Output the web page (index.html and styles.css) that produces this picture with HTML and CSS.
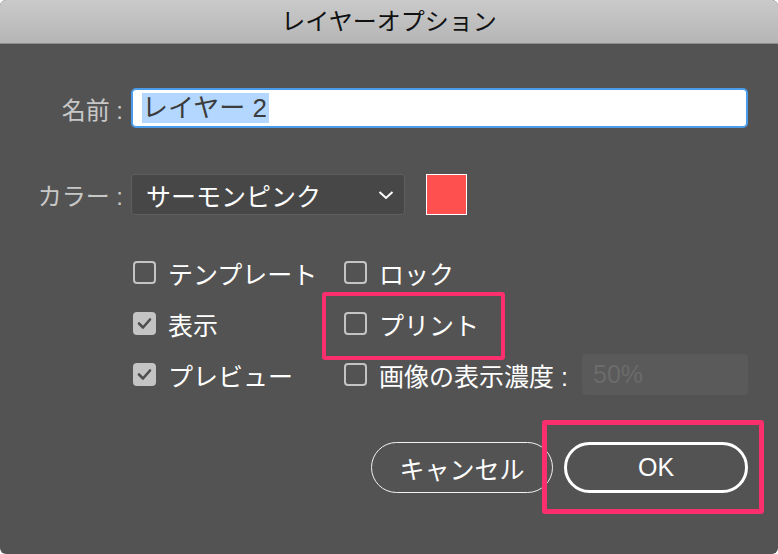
FILE: index.html
```html
<!DOCTYPE html>
<html lang="ja">
<head>
    <meta charset="UTF-8">
    <title>レイヤーオプション</title>
    <link rel="stylesheet" href="styles.css">
</head>
<body>
    <div class="dialog">
        <div class="titlebar">レイヤーオプション</div>

        <div class="content">
            <div class="field">
                <label class="field-label">名前 :</label>
                <div class="name-input"><span class="selected">レイヤー 2</span></div>
            </div>

            <div class="field field-color">
                <label class="field-label">カラー :</label>
                <div class="select">
                    <span>サーモンピンク</span>
                    <svg class="chevron" width="16" height="10" viewBox="0 0 16 10">
                        <polyline points="1.5,2 8,8 14.5,2" fill="none" stroke="#fff" stroke-width="2"/>
                    </svg>
                </div>
                <div class="swatch"></div>
            </div>

            <div class="options">
                <div class="option"><span class="box"></span>テンプレート</div>
                <div class="option"><span class="box"></span>ロック</div>
                <div class="option">
                    <span class="box checked">
                        <svg width="23" height="23" viewBox="0 0 23 23"><polyline points="6,11.5 10,15.5 17,7.5" fill="none" stroke="#4f4f4f" stroke-width="2.6" stroke-linecap="round" stroke-linejoin="round"/></svg>
                    </span>表示
                </div>
                <div class="option"><span class="box"></span>プリント</div>
                <div class="option">
                    <span class="box checked">
                        <svg width="23" height="23" viewBox="0 0 23 23"><polyline points="6,11.5 10,15.5 17,7.5" fill="none" stroke="#4f4f4f" stroke-width="2.6" stroke-linecap="round" stroke-linejoin="round"/></svg>
                    </span>プレビュー
                </div>
                <div class="option">
                    <span class="box"></span>画像の表示濃度 :
                    <div class="dim-input">50%</div>
                </div>
            </div>

            <div class="buttons">
                <button class="btn">キャンセル</button>
                <button class="btn btn-ok">OK</button>
            </div>
        </div>

        <!-- 注釈の枠 -->
        <div class="mark mark-print"></div>
        <div class="mark mark-ok"></div>
    </div>
</body>
</html>
```

FILE: styles.css
```css
body {
    margin: 0;
    background: #ffffff;
    font-family: "Liberation Sans", "Noto Sans CJK JP", sans-serif;
}
.dialog {
    position: relative;
    width: 778px;
    height: 554px;
    background: #535353;
    border-radius: 6px;
    overflow: hidden;
}
.titlebar {
    height: 43px;
    line-height: 43px;
    text-align: center;
    font-size: 24px;
    color: #111;
    background: linear-gradient(#cacaca, #b5b5b5);
    border-bottom: 1px solid #8e8e8e;
}
.content {
    padding: 44px 30px 0 0;
}
.field {
    display: flex;
    align-items: center;
}
.field-label {
    width: 131px;
    padding-right: 8px;
    box-sizing: border-box;
    text-align: right;
    font-size: 24px;
    color: #c8c8c8;
}
.name-input {
    flex: 1;
    height: 40px;
    box-sizing: border-box;
    border: 2px solid #4a9be8;
    border-radius: 5px;
    background: #fff;
    display: flex;
    align-items: center;
    padding-left: 9px;
}
.selected {
    background: #b3d7ff;
    color: #3c3c3c;
    font-size: 26px;
    line-height: 30px;
    padding-right: 2px;
}
.field-color {
    margin-top: 46px;
}
.select {
    width: 274px;
    height: 41px;
    box-sizing: border-box;
    background: #474747;
    border: 1px solid #5e5e5e;
    border-radius: 4px;
    display: flex;
    align-items: center;
    justify-content: space-between;
    padding: 0 10px 0 14px;
    color: #fff;
    font-size: 25px;
}
.chevron {
    display: block;
}
.swatch {
    width: 41px;
    height: 41px;
    box-sizing: border-box;
    margin-left: 21px;
    margin-top: -1px;
    background: #ff5050;
    border: 1px solid #fff;
}
.options {
    margin: 32px 0 0 133px;
    display: grid;
    grid-template-columns: 211px 404px;
    grid-auto-rows: 51px;
}
.option {
    display: flex;
    align-items: center;
    gap: 12px;
    color: #fff;
    font-size: 25px;
}
.box {
    width: 23px;
    height: 23px;
    box-sizing: border-box;
    border: 2px solid #c4c4c4;
    border-radius: 4px;
    flex: none;
}
.box.checked {
    background: #c4c4c4;
    border: none;
}
.box svg {
    display: block;
}
.dim-input {
    width: 166px;
    height: 41px;
    margin-left: auto;
    box-sizing: border-box;
    background: #5a5a5a;
    border-radius: 4px;
    color: #6b6b6b;
    font-size: 25px;
    line-height: 41px;
    padding-left: 11px;
}
.buttons {
    margin-top: 42px;
    display: flex;
    justify-content: flex-end;
    gap: 11px;
}
.btn {
    width: 182px;
    height: 51px;
    border: 1.5px solid #f2f2f2;
    border-radius: 26px;
    background: transparent;
    color: #fff;
    font-family: inherit;
    font-size: 25px;
    padding: 0;
}
.btn-ok {
    width: 184px;
    border: 3px solid #fff;
}
.mark {
    position: absolute;
    border: 4px solid #fb2f6d;
    border-radius: 3px;
    box-sizing: border-box;
}
.mark-print {
    left: 322px;
    top: 292px;
    width: 183px;
    height: 68px;
}
.mark-ok {
    left: 542px;
    top: 420px;
    width: 222px;
    height: 94px;
    border-width: 5px;
}
```
